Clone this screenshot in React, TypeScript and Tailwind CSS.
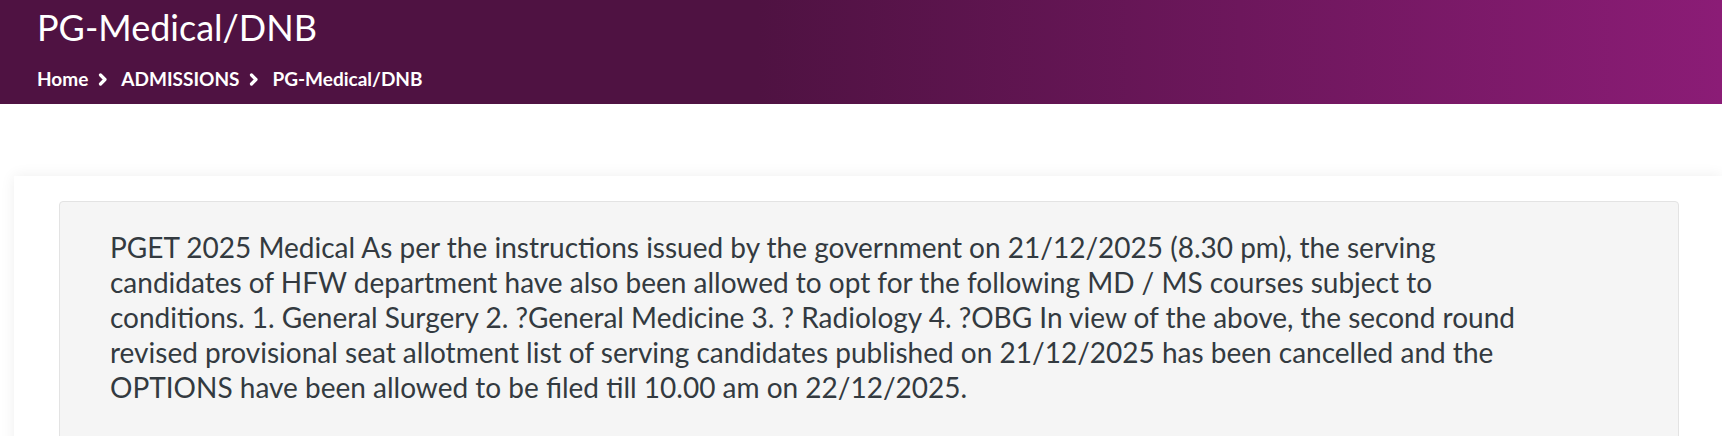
import React from "react";

function Chevron() {
  return (
    <svg width="10" height="13" viewBox="0 0 10 13" className="ml-[10px] mr-[13px] shrink-0">
      <polyline points="2.5,2 7,6.5 2.5,11" fill="none" stroke="white" strokeWidth="3.2" strokeLinecap="round" strokeLinejoin="round" />
    </svg>
  );
}

const NOTICE =
  "PGET 2025 Medical As per the instructions issued by the government on 21/12/2025 (8.30 pm), the serving candidates of HFW department have also been allowed to opt for the following MD / MS courses subject to conditions. 1. General Surgery 2. ?General Medicine 3. ? Radiology 4. ?OBG In view of the above, the second round revised provisional seat allotment list of serving candidates published on 21/12/2025 has been cancelled and the OPTIONS have been allowed to be filed till 10.00 am on 22/12/2025.";

export default function App() {
  return (
    <div className="min-h-screen bg-white font-['Lato','Liberation_Sans',sans-serif] overflow-hidden">
      {/* Page banner */}
      <div className="h-[104px] bg-[linear-gradient(to_right,#4f1242_0%,#4f1242_44%,#8b1c76_100%)] pl-[37px] pt-[6px] text-white">
        <h1 className="text-[36px] leading-[42px] font-normal">PG-Medical/DNB</h1>
        <nav className="flex items-center mt-[20px] text-[19px] font-bold leading-[22px]">
          <span>Home</span>
          <Chevron />
          <span>ADMISSIONS</span>
          <Chevron />
          <span>PG-Medical/DNB</span>
        </nav>
      </div>

      {/* Content card */}
      <div className="mt-[72px] ml-[14px] bg-white shadow-[0_0_14px_rgba(0,0,0,0.07)] pt-[25px] pl-[45px] pr-[43px] pb-[40px]">
        <div className="bg-[#f5f5f5] border border-[#e3e3e3] rounded-[4px] pl-[50px] pr-[40px] pt-[28px] pb-[60px]">
          <p className="text-[28px] leading-[35px] text-[#333a40] max-w-[1440px]">{NOTICE}</p>
        </div>
      </div>
    </div>
  );
}
